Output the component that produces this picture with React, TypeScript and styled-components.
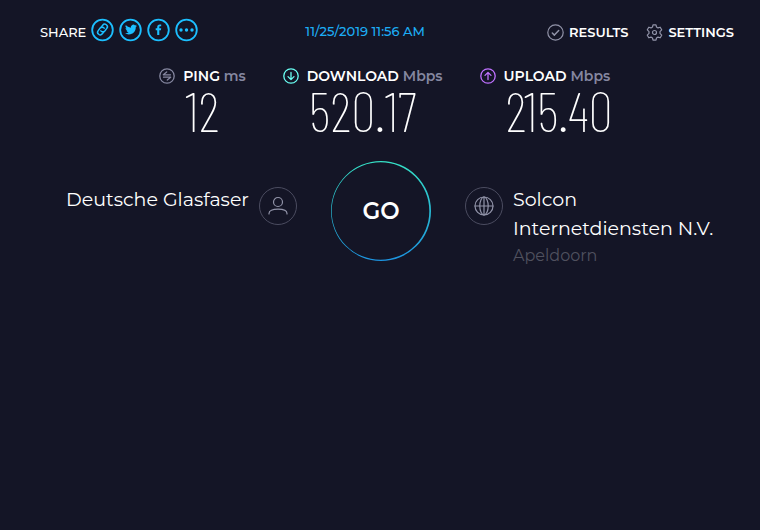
import React from "react";
import styled, { createGlobalStyle } from "styled-components";

const GlobalStyle = createGlobalStyle`
  *, *::before, *::after { box-sizing: border-box; }
  body { margin: 0; background: #141526; color: #fff; font-family: Montserrat, Inter, sans-serif; }
`;

const Page = styled.div`
  min-height: 100vh;
  background: #141526;
`;

const TopBar = styled.header`
  display: flex;
  align-items: center;
  justify-content: space-between;
  padding: 16px 26px 0 40px;
  font-size: 13px;
  line-height: 24px;
  font-weight: 500;
`;

const Share = styled.div`
  display: flex;
  align-items: center;
  gap: 5px;
`;

const ShareLabel = styled.span`
  padding-top: 4px;
`;

const ShareList = styled.div`
  display: flex;
  gap: 4px;
`;

const IconButton = styled.button`
  display: block;
  width: 24px;
  height: 24px;
  padding: 0;
  border: 0;
  background: none;
  color: #1cbfff;
  cursor: pointer;
  svg { display: block; }
`;

const ResultLink = styled.a`
  margin-right: 16px;
  padding-top: 2px;
  color: #1cadf5;
  text-decoration: none;
`;

const Nav = styled.nav`
  display: flex;
  gap: 18px;
  padding-top: 4px;
`;

const NavLink = styled.a`
  display: flex;
  align-items: center;
  gap: 5px;
  color: #fff;
  text-decoration: none;
  font-weight: 600;
  svg { color: #9193a8; }
`;

const Metrics = styled.section`
  display: flex;
  justify-content: center;
  gap: 37px;
  padding: 22px 0 0 12px;
`;

const MetricBox = styled.div`
  display: grid;
  grid-template-columns: 16px auto;
  column-gap: 8px;
  align-items: center;
`;

const MetricIcon = styled.span<{ $color: string }>`
  color: ${(p) => p.$color};
  svg { display: block; }
`;

const MetricLabel = styled.div`
  font-size: 14px;
  line-height: 20px;
  font-weight: 600;
`;

const Unit = styled.span`
  color: #8587a0;
`;

const Value = styled.div`
  grid-column: 2;
  padding-left: 2px;
  font-family: "Barlow Condensed", "Roboto Condensed", Roboto, sans-serif;
  font-weight: 200;
  font-size: 55px;
  line-height: 48px;
`;

const Connection = styled.main`
  display: grid;
  grid-template-columns: 1fr 100px 1fr;
  column-gap: 34px;
  padding: 27px 0 0 2px;
`;

const Party = styled.div<{ $side: "left" | "right" }>`
  display: flex;
  align-items: flex-start;
  gap: 10px;
  justify-content: ${(p) => (p.$side === "left" ? "flex-end" : "flex-start")};
  padding-top: 24px;
  padding-right: ${(p) => (p.$side === "left" ? "0" : "40px")};
`;

const PartyIcon = styled.span`
  display: flex;
  flex: none;
  align-items: center;
  justify-content: center;
  width: 38px;
  height: 38px;
  margin-top: 2px;
  border: 1px solid #4b4c60;
  border-radius: 50%;
  color: #9193a8;
`;

const PartyName = styled.div`
  font-size: 19px;
  line-height: 29px;
`;

const Place = styled.div`
  font-size: 16px;
  line-height: 26px;
  color: #50515f;
`;

const GoButton = styled.button`
  position: relative;
  width: 100px;
  height: 100px;
  padding: 0;
  border: 0;
  border-radius: 50%;
  background: none;
  color: #fff;
  font: 600 23px/100px Montserrat, Inter, sans-serif;
  cursor: pointer;
`;

const Ring = styled.svg`
  position: absolute;
  inset: 0;
`;

type StrokeProps = { size: number; children: React.ReactNode; width?: number };

const Stroke = ({ size, children, width = 1.2 }: StrokeProps) => (
  <svg
    width={size}
    height={size}
    viewBox={`0 0 ${size} ${size}`}
    fill="none"
    stroke="currentColor"
    strokeWidth={width}
    strokeLinecap="round"
    strokeLinejoin="round"
    aria-hidden="true"
  >
    {children}
  </svg>
);

const shareOptions = [
  {
    label: "Copy link",
    glyph: (
      <g transform="rotate(-52 11.5 11.5)" strokeWidth={1.5}>
        <path d="M10.500 14H8a2.600 2.600 0 0 1 0-5.200h3.200a2.600 2.600 0 0 1 2.400 3.200" />
        <path d="M12.500 9H15a2.600 2.600 0 0 1 0 5.200h-3.200a2.600 2.600 0 0 1-2.400-3.200" />
      </g>
    ),
  },
  {
    label: "Share on Twitter",
    glyph: (
      <path
        transform="translate(6 5.500) scale(.5)"
        fill="currentColor"
        stroke="none"
        d="M23.950 4.570a10 10 0 0 1-2.820.770 4.960 4.960 0 0 0 2.160-2.720c-.950.560-2 .960-3.130 1.190a4.920 4.920 0 0 0-8.380 4.480C7.690 8.090 4.070 6.130 1.640 3.160a4.920 4.920 0 0 0 1.520 6.570 4.900 4.900 0 0 1-2.230-.610v.060a4.920 4.920 0 0 0 3.950 4.830 5 5 0 0 1-2.210.080 4.940 4.940 0 0 0 4.600 3.420A9.870 9.870 0 0 1 0 19.540a13.990 13.990 0 0 0 7.550 2.210c9.050 0 14-7.500 14-13.980v-.640a9.940 9.940 0 0 0 2.400-2.560z"
      />
    ),
  },
  {
    label: "Share on Facebook",
    glyph: (
      <path
        fill="currentColor"
        stroke="none"
        d="M10.200 17v-4.800H8.700v-2h1.500V9c0-1.700 1-2.600 2.500-2.600h1.500v1.900h-1c-.700 0-.900.300-.900.900v1h1.900l-.300 2h-1.600V17z"
      />
    ),
  },
  {
    label: "More options",
    glyph: (
      <g fill="currentColor" stroke="none">
        <circle cx="6" cy="12" r="1.700" />
        <circle cx="11.500" cy="12" r="1.700" />
        <circle cx="17" cy="12" r="1.700" />
      </g>
    ),
  },
];

const metrics = [
  {
    label: "PING",
    unit: "ms",
    value: "12",
    color: "#8587a0",
    glyph: <path d="M11.500 6.800H4.300L7.700 4M4.500 9.200h7.200L8.300 12" />,
  },
  { label: "DOWNLOAD", unit: "Mbps", value: "520.17", color: "#6afff3", glyph: <path d="M8 4.500v7M5 8.600l3 3 3-3" /> },
  { label: "UPLOAD", unit: "Mbps", value: "215.40", color: "#bf71ff", glyph: <path d="M8 11.500v-7M5 7.400l3-3 3 3" /> },
];

export default function App() {
  return (
    <>
      <GlobalStyle />
      <Page>
        <TopBar>
          <Share>
            <ShareLabel>SHARE</ShareLabel>
            <ShareList>
              {shareOptions.map((option) => (
                <IconButton key={option.label} aria-label={option.label}>
                  <Stroke size={24} width={1.8}>
                    <circle cx="11.500" cy="12" r="10.300" />
                    {option.glyph}
                  </Stroke>
                </IconButton>
              ))}
            </ShareList>
          </Share>
          <ResultLink href="#result">11/25/2019 11:56 AM</ResultLink>
          <Nav>
            <NavLink href="#results">
              <Stroke size={17}>
                <circle cx="8.500" cy="8.500" r="7.700" />
                <path d="M5.300 9l2.100 2.100 4.300-4.600" strokeWidth={1.500} />
              </Stroke>
              RESULTS
            </NavLink>
            <NavLink href="#settings">
              <Stroke size={17}>
                <circle cx="8.500" cy="8.500" r="2" />
                <path d="M7 .800h3l.500 2.200 1.500.900 2.200-.700 1.500 2.600L14 7.600v1.800l1.700 1.800-1.500 2.600-2.200-.700-1.500.900-.500 2.200H7l-.500-2.200-1.500-.900-2.200.700-1.500-2.600L3 9.400V7.600L1.300 5.800l1.500-2.600 2.200.700 1.500-.900z" />
              </Stroke>
              SETTINGS
            </NavLink>
          </Nav>
        </TopBar>
        <Metrics>
          {metrics.map((m) => (
            <MetricBox key={m.label}>
              <MetricIcon $color={m.color}>
                <Stroke size={16} width={1.300}>
                  <circle cx="8" cy="8" r="7.200" />
                  {m.glyph}
                </Stroke>
              </MetricIcon>
              <MetricLabel>
                {m.label} <Unit>{m.unit}</Unit>
              </MetricLabel>
              <Value>{m.value}</Value>
            </MetricBox>
          ))}
        </Metrics>
        <Connection>
          <Party $side="left">
            <PartyName>Deutsche Glasfaser</PartyName>
            <PartyIcon>
              <Stroke size={20}>
                <circle cx="10" cy="6" r="4.500" />
                <path d="M1 18v-.500c0-3 3.500-4.300 9-4.300s9 1.300 9 4.300v.500" />
              </Stroke>
            </PartyIcon>
          </Party>
          <GoButton>
            <Ring viewBox="0 0 100 100" aria-hidden="true">
              <defs>
                <linearGradient id="ring" x1="0" y1="0" x2="0" y2="1">
                  <stop stopColor="#35e0c5" />
                  <stop offset="1" stopColor="#1c93e0" />
                </linearGradient>
              </defs>
              <path
                fill="url(#ring)"
                fillRule="evenodd"
                d="M50 0a50 50 0 1 1 0 100A50 50 0 1 1 50 0zM49.500 1.200a48.800 48.800 0 1 0 0 97.600A48.800 48.800 0 1 0 49.500 1.200z"
              />
            </Ring>
            GO
          </GoButton>
          <Party $side="right">
            <PartyIcon>
              <Stroke size={20}>
                <circle cx="10" cy="10" r="9" />
                <ellipse cx="10" cy="10" rx="4.200" ry="9" />
                <path d="M1 10h18M10 1v18" />
              </Stroke>
            </PartyIcon>
            <div>
              <PartyName>Solcon Internetdiensten N.V.</PartyName>
              <Place>Apeldoorn</Place>
            </div>
          </Party>
        </Connection>
      </Page>
    </>
  );
}
